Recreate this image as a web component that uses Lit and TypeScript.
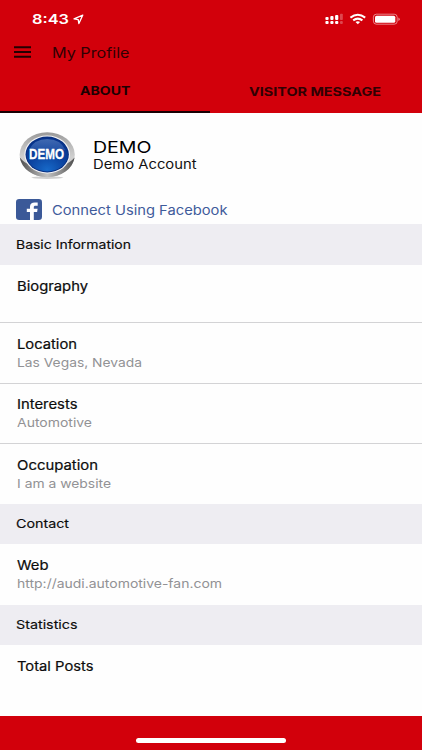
import { LitElement, html, css, svg } from "lit";
import { customElement, property } from "lit/decorators.js";

/** A single line of text, widened horizontally to the given width. */
@customElement("wide-text")
export class WideText extends LitElement {
  @property() text = "";
  @property({ type: Number }) width = 0;

  static styles = css`
    :host { display: block; white-space: nowrap; }
    .line { display: inline-block; transform-origin: 0 50%; vertical-align: top; }
  `;

  updated() {
    const line = this.renderRoot.querySelector(".line") as HTMLElement;
    line.style.transform = "none";
    const natural = line.getBoundingClientRect().width;
    if (natural && this.width) {
      line.style.transform = `scaleX(${this.width / natural})`;
      this.style.width = `${this.width}px`;
    }
  }

  render() {
    return html`<span class="line">${this.text}</span>`;
  }
}

interface Entry { title: string; tw: number; value?: string; vw?: number; size: string; }
interface Section { name: string; nw: number; entries: Entry[]; }

const SECTIONS: Section[] = [
  {
    name: "Basic Information", nw: 115,
    entries: [
      { title: "Biography", tw: 71, size: "bio" },
      { title: "Location", tw: 60, value: "Las Vegas, Nevada", vw: 125, size: "mid" },
      { title: "Interests", tw: 60.5, value: "Automotive", vw: 75, size: "mid" },
      { title: "Occupation", tw: 81, value: "I am a website", vw: 94, size: "mid" },
    ],
  },
  {
    name: "Contact", nw: 53,
    entries: [{ title: "Web", tw: 31.5, value: "http://audi.automotive-fan.com", vw: 205, size: "mid" }],
  },
  {
    name: "Statistics", nw: 61.5,
    entries: [{ title: "Total Posts", tw: 76.5, size: "last" }],
  },
];

@customElement("app-root")
export class AppRoot extends LitElement {
  static styles = css`
    :host {
      display: flex; flex-direction: column; width: 422px; height: 750px; overflow: hidden;
      background: #fefefe; color: #0c0c0c; font: 13px/18px Inter, "Liberation Sans", sans-serif;
    }
    svg { display: block; flex: none; }
    .header { background: #d2000b; height: 112.5px; flex: none; display: flex; flex-direction: column; }
    .status { height: 38px; display: flex; align-items: center; padding: 0 22px 0 32px; color: #fff; }
    .time { font-size: 13.5px; font-weight: 600; }
    .arrow { margin-left: 4px; }
    .signals { margin-left: auto; }
    .nav { height: 28px; display: flex; align-items: center; padding-left: 13.5px; }
    .nav-title { margin-left: 21px; font-size: 14px; color: #300003; padding-top: 1px; }
    .tabs { flex: 1; display: flex; }
    .tab { flex: 1; display: flex; justify-content: center; font-size: 12px; font-weight: 700; color: #300003; padding: 16.5px 1.5px 0 0; }
    .tab.active { color: #1d0002; border-bottom: 2.5px solid #180003; padding: 15.5px 0 0; }
    .profile { height: 111.5px; flex: none; display: flex; flex-direction: column; }
    .user { display: flex; padding: 17px 0 0 18px; height: 67px; }
    .badge { position: relative; width: 58px; height: 50px; flex: none; }
    .badge-text { position: absolute; left: 11.3px; top: 15.5px; font: 700 15.5px/18px "Liberation Sans", sans-serif; color: #fff; -webkit-text-stroke: .3px #fff; }
    .names { margin-left: 17px; padding-top: 6px; }
    .display { font-size: 16.4px; line-height: 22px; color: #000; }
    .account { font-size: 13px; line-height: 13px; color: #111; }
    .facebook { display: flex; align-items: center; padding: 2px 0 0 16.4px; color: #3f5b9b; font-size: 13px; }
    .fb-label { margin-left: 10px; padding-top: 1px; }
    .section { height: 40.5px; box-sizing: border-box; flex: none; background: #eeedf2; padding: 11.5px 0 0 16.3px; font-size: 12px; -webkit-text-stroke: .15px; }
    .entry { box-sizing: border-box; flex: none; padding: 12.2px 0 0 16.5px; line-height: 18.5px; }
    .entry + .entry { border-top: 1px solid #d3d3d5; padding-top: 11.8px; }
    .bio { height: 57.5px; }
    .mid { height: 60.5px; }
    .last { height: 71px; }
    .title { -webkit-text-stroke: .2px; }
    .value { font-size: 12.3px; color: #929295; padding-top: .5px; }
    .footer { flex: 1; background: #d2000b; display: flex; justify-content: center; align-items: flex-start; }
    .pill { width: 150px; height: 5px; border-radius: 3px; background: #fff; margin-top: 22px; }
  `;

  private signals() {
    return html`<svg width="76" height="14" viewBox="324 12 76 14">
      ${[325.4, 330.3, 335.1].map((x, i) => svg`
        <rect x=${x} y=${[17, 15.9, 14.9][i]} width="3.2" height=${[3, 4.1, 5.1][i]} rx="1" fill="#fff"/>
        <rect x=${x} y="21" width="3.2" height="3" rx="1" fill="#fff"/>`)}
      <g fill="#fff" opacity=".28"><rect x="340" y="13.8" width="2.8" height="6.2" rx=".8"/><rect x="340" y="21" width="2.8" height="3" rx="1"/></g>
      <g fill="none" stroke="#fff" stroke-width="2">
        <path d="M350.4 17.6Q357.8 12 365.2 17.6"/><path d="M353.2 20.4Q357.8 16.8 362.4 20.4"/>
      </g>
      <path d="M355.5 22Q357.8 20.4 360.1 22L357.8 24.2Z" fill="#fff"/>
      <rect x="373.4" y="14.2" width="23.8" height="10" rx="3" fill="none" stroke="#fff" stroke-opacity=".5" stroke-width="1"/>
      <rect x="375" y="15.7" width="20.3" height="7.1" rx="1.6" fill="#fff"/>
      <path d="M398.3 17.4Q399.8 18 399.8 19.2T398.3 21Z" fill="#fff" opacity=".5"/>
    </svg>`;
  }

  private badge() {
    return html`<div class="badge"><svg width="58" height="50" viewBox="18 129 58 50">
      <defs>
        <linearGradient id="rim" x2="0" y2="1"><stop offset="0" stop-color="#999"/><stop offset=".3" stop-color="#bbb"/><stop offset=".55" stop-color="#cfcfcf"/></linearGradient>
        <linearGradient id="base"><stop offset="0" stop-color="#4c4c4c"/><stop offset=".25" stop-color="#8c8c8c"/><stop offset=".5" stop-color="#c2c2c2"/><stop offset=".75" stop-color="#8c8c8c"/><stop offset="1" stop-color="#4c4c4c"/></linearGradient>
        <radialGradient id="blue" cx=".5" cy=".95" r=".9"><stop offset="0" stop-color="#1769c8"/><stop offset=".5" stop-color="#0b43a0"/><stop offset="1" stop-color="#06328b"/></radialGradient>
        <linearGradient id="gloss" x2="0" y2="1"><stop offset="0" stop-color="#5f86c6"/><stop offset="1" stop-color="#2352a5"/></linearGradient>
      </defs>
      <ellipse cx="47.3" cy="176.6" rx="16" ry="1.3" fill="#bbb" opacity=".7"/>
      <ellipse cx="47.2" cy="153.7" rx="27.6" ry="22.4" fill="url(#rim)"/>
      <path d="M19.8 156.5A27.6 22.4 0 0 0 74.6 156.5Q70 162 62 165H32Q24 162 19.8 156.5Z" fill="url(#base)"/>
      <ellipse cx="47.2" cy="153.5" rx="22.8" ry="19" fill="#f4f4f6"/>
      <ellipse cx="47.2" cy="153.5" rx="21.7" ry="17.9" fill="#082f80"/>
      <ellipse cx="47.2" cy="153.5" rx="20.7" ry="16.9" fill="url(#blue)"/>
      <path d="M29 149Q34 138 47.2 138T65.4 149Q47 155 29 149Z" fill="url(#gloss)" opacity=".65"/>
    </svg><wide-text class="badge-text" text="DEMO" .width=${35}></wide-text></div>`;
  }

  render() {
    return html`
      <div class="header">
        <div class="status">
          <wide-text class="time" text="8:43" .width=${37}></wide-text>
          <svg class="arrow" width="11" height="11" viewBox="0 0 11 11"><path d="M1 4.9L9.8 1.1L5.9 9.6L5.2 5.6Z" fill="none" stroke="#fff" stroke-width="1.3" stroke-linejoin="round"/></svg>
          <div class="signals">${this.signals()}</div>
        </div>
        <div class="nav">
          <svg width="17" height="12" viewBox="0 0 17 12"><path d="M0 1.2H17M0 6H17M0 10.8H17" stroke="#240002" stroke-width="2"/></svg>
          <wide-text class="nav-title" text="My Profile" .width=${77.5}></wide-text>
        </div>
        <div class="tabs">
          <div class="tab active"><wide-text text="ABOUT" .width=${50.5}></wide-text></div>
          <div class="tab"><wide-text text="VISITOR MESSAGE" .width=${132}></wide-text></div>
        </div>
      </div>
      <div class="profile">
        <div class="user">
          ${this.badge()}
          <div class="names">
            <wide-text class="display" text="DEMO" .width=${58.5}></wide-text>
            <wide-text class="account" text="Demo Account" .width=${103.5}></wide-text>
          </div>
        </div>
        <div class="facebook">
          <svg width="26" height="21" viewBox="0 0 26 21"><rect width="26" height="21" rx="3.2" fill="#3b5998"/><path d="M14 21V13H10.8V9.8H14V7.6C14 4.9 15.8 3.5 18.8 3.5H21.7V6.7H19.7C18.2 6.7 17.8 7.2 17.8 8.2V9.8H21.6L21.1 13H17.8V21Z" fill="#fff"/></svg>
          <wide-text class="fb-label" text="Connect Using Facebook" .width=${175.5}></wide-text>
        </div>
      </div>
      ${SECTIONS.map((s) => html`
        <div class="section"><wide-text text=${s.name} .width=${s.nw}></wide-text></div>
        ${s.entries.map((e) => html`
          <div class="entry ${e.size}">
            <wide-text class="title" text=${e.title} .width=${e.tw}></wide-text>
            ${e.value ? html`<wide-text class="value" text=${e.value} .width=${e.vw}></wide-text>` : ""}
          </div>`)}`)}
      <div class="footer"><div class="pill"></div></div>
    `;
  }
}
